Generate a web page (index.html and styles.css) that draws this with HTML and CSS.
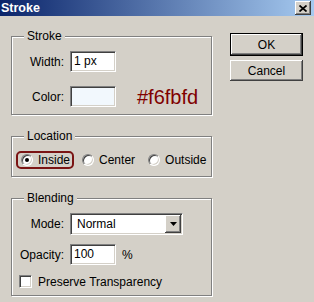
FILE: index.html
```html
<!DOCTYPE html>
<html>
<head>
<meta charset="utf-8">
<link rel="stylesheet" href="styles.css">
</head>
<body>
<div class="titlebar">
  <span class="title">Stroke</span>
  <span class="close"><svg width="8" height="7" viewBox="0 0 8 7"><path d="M0.5 0.5 L7.5 6.5 M7.5 0.5 L0.5 6.5" stroke="#000" stroke-width="1.7" fill="none"/></svg></span>
</div>
<div class="main">
  <div class="groups">
    <fieldset class="group g-stroke">
      <legend>Stroke</legend>
      <div class="form">
        <label class="lbl">Width:</label>
        <div class="field small">1 px</div>
        <span></span>
        <label class="lbl">Color:</label>
        <div class="field small swatch"></div>
        <span class="hex">#f6fbfd</span>
      </div>
    </fieldset>
    <fieldset class="group g-location">
      <legend>Location</legend>
      <div class="radios">
        <div class="opt hl"><span class="radio checked"></span><span>Inside</span></div>
        <div class="opt"><span class="radio"></span><span>Center</span></div>
        <div class="opt far"><span class="radio"></span><span>Outside</span></div>
      </div>
    </fieldset>
    <fieldset class="group g-blending">
      <legend>Blending</legend>
      <div class="form blend">
        <label class="lbl">Mode:</label>
        <div class="field select"><span class="sel-text">Normal</span><span class="arrow"><svg width="7" height="4" viewBox="0 0 7 4"><path d="M0 0 H7 L3.5 4 Z" fill="#000"/></svg></span></div>
        <label class="lbl">Opacity:</label>
        <div class="field small">100</div>
        <span class="pct">%</span>
      </div>
      <div class="check-row"><span class="checkbox"></span><span>Preserve Transparency</span></div>
    </fieldset>
  </div>
  <div class="buttons">
    <button class="btn default">OK</button>
    <button class="btn">Cancel</button>
  </div>
</div>
</body>
</html>
```
FILE: styles.css
```css
* { box-sizing: border-box; }
html, body { margin: 0; padding: 0; }
body {
  width: 314px;
  height: 302px;
  overflow: hidden;
  background: #d4d0c8;
  font: 12px "Liberation Sans", Arial, sans-serif;
  color: #000;
}
.titlebar {
  height: 16px;
  background: linear-gradient(to right, #0a246a, #a6caf0);
  display: flex;
  align-items: center;
  justify-content: space-between;
  padding: 0 3px 0 1px;
}
.title {
  color: #fff;
  font-weight: bold;
  font-size: 12.5px;
  line-height: 16px;
}
.close {
  width: 16px;
  height: 14px;
  background: #d4d0c8;
  box-shadow: inset -1px -1px #404040, inset 1px 1px #fff, inset -2px -2px #808080;
  display: flex;
  align-items: center;
  justify-content: center;
}
.close svg { display: block; }
.main {
  display: flex;
  padding: 13px 11px 0 11px;
  gap: 18px;
}
.groups {
  width: 202px;
  display: flex;
  flex-direction: column;
  gap: 14px;
}
fieldset.group {
  margin: 0;
  min-width: 0;
  border: 1px solid #808080;
  box-shadow: 1px 1px 0 #fff, inset 1px 1px 0 #fff;
  padding: 8px 0 7px 0;
}
legend {
  margin-left: 12px;
  padding: 0 3px;
  line-height: 14px;
  background: #d4d0c8;
}
.form {
  display: grid;
  grid-template-columns: 52px auto 1fr;
  column-gap: 6px;
  row-gap: 14px;
  align-items: center;
}
.lbl { text-align: right; }
.field {
  height: 21px;
  background: #fff;
  border: 1px solid;
  border-color: #808080 #fff #fff #808080;
  box-shadow: inset 1px 1px #404040, inset -1px -1px #d4d0c8;
  padding: 0 3px;
  line-height: 19px;
}
.small { width: 46px; }
.swatch { background: #f2f8fd; }
.hex {
  font-size: 20px;
  color: #800000;
  margin-left: 15px;
  line-height: 20px;
}
.g-location { padding: 7px 0 4px 0; }
.radios {
  display: flex;
  align-items: center;
  padding-left: 4px;
  gap: 8px;
}
.opt {
  display: flex;
  align-items: center;
  gap: 5px;
  height: 18px;
}
.opt.far { margin-left: 5px; }
.hl {
  border: 2px solid #7a1414;
  border-radius: 5px;
  padding: 0 2px 0 3px;
}
.radio {
  width: 12px;
  height: 12px;
  border-radius: 50%;
  background: #fff;
  border: 1px solid;
  border-color: #808080 #fff #fff #808080;
  box-shadow: inset 1px 1px #404040, inset -1px -1px #d4d0c8;
  display: flex;
  align-items: center;
  justify-content: center;
}
.radio.checked::after {
  content: "";
  width: 4px;
  height: 4px;
  border-radius: 50%;
  background: #000;
}
.g-blending { padding: 6px 0 6px 0; }
.blend { row-gap: 9px; }
.select {
  grid-column: span 2;
  width: 113px;
  height: 22px;
  display: flex;
  align-items: center;
  justify-content: space-between;
  padding: 0 1px 0 6px;
}
.arrow {
  width: 16px;
  height: 18px;
  background: #d4d0c8;
  box-shadow: inset -1px -1px #404040, inset 1px 1px #fff, inset -2px -2px #808080;
  display: flex;
  align-items: center;
  justify-content: center;
}
.arrow svg { display: block; }
.check-row {
  display: flex;
  align-items: center;
  gap: 6px;
  padding-left: 7px;
  margin-top: 10px;
  height: 13px;
}
.checkbox {
  width: 13px;
  height: 13px;
  background: #fff;
  border: 1px solid;
  border-color: #808080 #fff #fff #808080;
  box-shadow: inset 1px 1px #404040, inset -1px -1px #d4d0c8;
}
.buttons {
  display: flex;
  flex-direction: column;
  gap: 4px;
  padding-top: 4px;
  width: 73px;
}
.btn {
  width: 73px;
  height: 21px;
  font: inherit;
  color: #000;
  background: #d4d0c8;
  border: 0;
  padding: 0;
  box-shadow: inset -1px -1px #404040, inset 1px 1px #fff, inset -2px -2px #808080;
}
.btn.default {
  height: 23px;
  border: 1px solid #000;
}
```
